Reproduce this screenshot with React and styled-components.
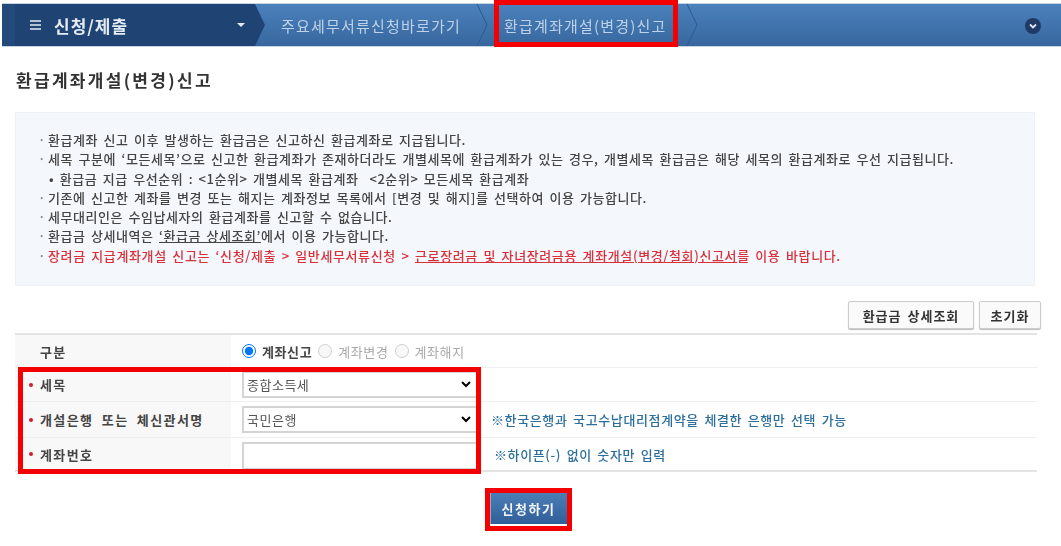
import React from "react";
import styled, { createGlobalStyle } from "styled-components";

const GlobalStyle = createGlobalStyle`
	html, body {
		margin: 0;
		padding: 0;
		background: #fff;
	}
	body {
		font-family: "Noto Sans CJK KR", "Noto Sans", sans-serif;
		color: #444;
	}
`;

const Page = styled.div`
	position: relative;
	width: 1061px;
	height: 546px;
	overflow: hidden;
	padding-top: 3px;
	box-sizing: border-box;
	filter: blur(0.5px);
`;

const Nav = styled.nav`
	display: flex;
	align-items: center;
	height: 44px;
	margin-left: 2px;
	border-top: 1px solid #c9d4e3;
	border-bottom: 1px solid #c9d4e3;
	box-sizing: border-box;
	background: linear-gradient(#4b81bc, #38679e);
`;

const MenuSegment = styled.div`
	display: flex;
	align-items: center;
	width: 263px;
	height: 100%;
	padding-left: 28px;
	box-sizing: border-box;
	background: #1f4473;
	clip-path: polygon(0 0, 253px 0, 263px 50%, 253px 100%, 0 100%);
	color: #e4ebf4;
	box-shadow: inset 13px 0 0 #234a7b;
`;

const MenuTitle = styled.span`
	margin-left: 13px;
	font-size: 17px;
	letter-spacing: 1px;
	font-weight: 700;
	flex: 1;
`;

const Caret = styled.span`
	width: 0;
	height: 0;
	margin-right: 20px;
	border-left: 4px solid transparent;
	border-right: 4px solid transparent;
	border-top: 4px solid #e4ebf4;
`;

const Crumb = styled.span`
	margin-left: ${(p) => p.$gap}px;
	font-size: 15px;
	letter-spacing: 1.2px;
	color: #bdd2e8;
	white-space: nowrap;
`;

const Chevron = styled.svg`
	flex: none;
	width: 12px;
	height: 42px;
	margin-left: ${(p) => p.$gap}px;
`;

const RoundButton = styled.span`
	display: flex;
	align-items: center;
	justify-content: center;
	width: 16px;
	height: 16px;
	margin-left: auto;
	margin-right: 20px;
	margin-top: 2px;
	border-radius: 50%;
	background: #1f3a66;
`;

const Content = styled.main`
	padding: 0 20px 0 15px;
`;

const Title = styled.h1`
	margin: 21px 0 20px 1px;
	font-size: 17px;
	line-height: 24px;
	font-weight: 700;
	color: #333;
	letter-spacing: 2.3px;
`;

const InfoBox = styled.ul`
	width: 1020px;
	height: 174px;
	margin: 0;
	padding: 17px 0 0 22px;
	box-sizing: border-box;
	list-style: none;
	background: #f4f7fc;
	border: 1px solid #eef1f6;
`;

const InfoLine = styled.li`
	display: flex;
	height: 19.3px;
	line-height: 19.3px;
	font-size: 13px;
	letter-spacing: ${(p) => (p.$red ? "0.62px" : "0.55px")};
	word-spacing: 2px;
	font-weight: 500;
	white-space: pre;
	color: ${(p) => (p.$red ? "#d9303a" : "#444")};
	padding-left: ${(p) => (p.$sub ? "11px" : "0")};

	&::before {
		content: "${(p) => (p.$sub ? "" : "·")}";
		width: ${(p) => (p.$sub ? "0" : "10px")};
		color: #888;
	}
`;

const InfoLink = styled.span`
	text-decoration: underline;
`;

const ButtonRow = styled.div`
	display: flex;
	justify-content: flex-end;
	gap: 5px;
	width: 1026px;
	margin-top: 15px;
	margin-bottom: 4px;
`;

const PlainButton = styled.button`
	width: ${(p) => p.$width}px;
	height: 28px;
	padding: 0;
	border: 1px solid #ccc;
	border-radius: 2px;
	background: #fafafa;
	box-shadow: 0 1px 1px #bbb;
	font-family: inherit;
	font-size: 13px;
	font-weight: 700;
	letter-spacing: 1px;
	word-spacing: 2px;
	color: #333;
`;

const FormTable = styled.div`
	width: 1022px;
	border-top: 2px solid #e4e4e4;
	border-bottom: 2px solid #e4e4e4;
`;

const Row = styled.div`
	display: grid;
	grid-template-columns: 216px 1fr;
	height: ${(p) => p.$height}px;
	& + & {
		border-top: 1px solid #eee;
	}
`;

const Label = styled.div`
	display: flex;
	align-items: center;
	padding-left: ${(p) => (p.$required ? "14px" : "25px")};
	background: #f8f8f8;
	font-size: 13px;
	font-weight: 700;
	letter-spacing: 1.4px;
	word-spacing: 4px;
	color: #444;
	gap: 7px;
`;

const RequiredMark = styled.span`
	width: 4px;
	height: 4px;
	border-radius: 50%;
	background: #d01c2c;
`;

const Field = styled.div`
	display: flex;
	align-items: center;
	padding-left: 11px;
`;

const RadioOption = styled.label`
	display: flex;
	align-items: center;
	gap: 6px;
	margin-right: 6px;
	font-size: 13px;
	letter-spacing: 0.6px;
	font-weight: ${(p) => (p.$active ? 700 : 400)};
	color: ${(p) => (p.$active ? "#444" : "#aaa")};
`;

const Radio = styled.input`
	width: 14px;
	height: 14px;
	margin: 0;
`;

const Select = styled.select`
	width: 236px;
	height: 27px;
	flex: none;
	appearance: none;
	border: 2px solid #d4d4d4;
	background: #fff url("data:image/svg+xml;utf8,<svg xmlns='http://www.w3.org/2000/svg' width='10' height='7' viewBox='0 0 10 7'><path d='M1 1l4 4 4-4' fill='none' stroke='black' stroke-width='2'/></svg>") no-repeat right 5px center;
	font-family: inherit;
	font-size: 13px;
	letter-spacing: 0.5px;
	color: #555;
	padding-left: 3px;
`;

const TextInput = styled.input`
	width: 236px;
	height: 28px;
	flex: none;
	margin-top: 4px;
	box-sizing: border-box;
	border: 2px solid #d4d4d4;
	background: #fff;
`;

const Hint = styled.span`
	margin-left: ${(p) => p.$gap}px;
	font-size: 13px;
	letter-spacing: 0.62px;
	word-spacing: 2px;
	font-weight: 500;
	color: #2c6f9c;
	white-space: nowrap;
`;

const SubmitRow = styled.div`
	display: flex;
	justify-content: center;
	width: 1026px;
	margin-top: 21px;
`;

const SubmitButton = styled.button`
	width: 77px;
	height: 31px;
	padding: 0;
	border: none;
	border-left: 1px solid #8fa9c8;
	background: linear-gradient(#4c7eb6, #2f5e98);
	font-family: inherit;
	font-size: 13px;
	letter-spacing: 1.6px;
	font-weight: 700;
	color: #f0f4fa;
`;

const RedFrame = styled.div`
	position: absolute;
	left: ${(p) => p.$x}px;
	top: ${(p) => p.$y}px;
	width: ${(p) => p.$w}px;
	height: ${(p) => p.$h}px;
	box-sizing: border-box;
	border: 5px solid #f50000;
`;

const App = () => {
  return (
    <Page>
      <GlobalStyle />
      <Nav>
        <MenuSegment>
          <svg width="11" height="10" viewBox="0 0 11 10">
            <path d="M0 1h11M0 5h11M0 9h11" stroke="#e4ebf4" strokeWidth="1.6" />
          </svg>
          <MenuTitle>신청/제출</MenuTitle>
          <Caret />
        </MenuSegment>
        <Crumb $gap={16}>주요세무서류신청바로가기</Crumb>
        <Chevron $gap={15} viewBox="0 0 12 42">
          <path d="M1 0l10 21L1 42" fill="none" stroke="#2d5a8f" />
        </Chevron>
        <Crumb $gap={16}>환급계좌개설(변경)신고</Crumb>
        <Chevron $gap={19} viewBox="0 0 12 42">
          <path d="M1 0l10 21L1 42" fill="none" stroke="#2d5a8f" />
        </Chevron>
        <RoundButton>
          <svg width="10" height="10" viewBox="0 0 10 10">
            <path d="M2 3.5l3 3 3-3" fill="none" stroke="#dfe6f0" strokeWidth="1.8" />
          </svg>
        </RoundButton>
      </Nav>
      <Content>
        <Title>환급계좌개설(변경)신고</Title>
        <InfoBox>
          <InfoLine>환급계좌 신고 이후 발생하는 환급금은 신고하신 환급계좌로 지급됩니다.</InfoLine>
          <InfoLine>세목 구분에 ‘모든세목’으로 신고한 환급계좌가 존재하더라도 개별세목에 환급계좌가 있는 경우, 개별세목 환급금은 해당 세목의 환급계좌로 우선 지급됩니다.</InfoLine>
          <InfoLine $sub>• 환급금 지급 우선순위 : &lt;1순위&gt; 개별세목 환급계좌  &lt;2순위&gt; 모든세목 환급계좌</InfoLine>
          <InfoLine>기존에 신고한 계좌를 변경 또는 해지는 계좌정보 목록에서 [변경 및 해지]를 선택하여 이용 가능합니다.</InfoLine>
          <InfoLine>세무대리인은 수임납세자의 환급계좌를 신고할 수 없습니다.</InfoLine>
          <InfoLine>환급금 상세내역은 <InfoLink>‘환급금 상세조회’</InfoLink>에서 이용 가능합니다.</InfoLine>
          <InfoLine $red>장려금 지급계좌개설 신고는 ‘신청/제출 &gt; 일반세무서류신청 &gt; <InfoLink>근로장려금 및 자녀장려금용 계좌개설(변경/철회)신고서</InfoLink>를 이용 바랍니다.</InfoLine>
        </InfoBox>
        <ButtonRow>
          <PlainButton $width={126}>환급금 상세조회</PlainButton>
          <PlainButton $width={62}>초기화</PlainButton>
        </ButtonRow>
        <FormTable>
          <Row $height={32}>
            <Label>구분</Label>
            <Field>
              <RadioOption $active>
                <Radio type="radio" name="kind" defaultChecked />
                계좌신고
              </RadioOption>
              <RadioOption>
                <Radio type="radio" name="kind" disabled />
                계좌변경
              </RadioOption>
              <RadioOption>
                <Radio type="radio" name="kind" disabled />
                계좌해지
              </RadioOption>
            </Field>
          </Row>
          <Row $height={33}>
            <Label $required>
              <RequiredMark />
              세목
            </Label>
            <Field>
              <Select defaultValue="종합소득세">
                <option>종합소득세</option>
              </Select>
            </Field>
          </Row>
          <Row $height={35}>
            <Label $required>
              <RequiredMark />
              개설은행 또는 체신관서명
            </Label>
            <Field>
              <Select defaultValue="국민은행">
                <option>국민은행</option>
              </Select>
              <Hint $gap={13}>※한국은행과 국고수납대리점계약을 체결한 은행만 선택 가능</Hint>
            </Field>
          </Row>
          <Row $height={32}>
            <Label $required>
              <RequiredMark />
              계좌번호
            </Label>
            <Field>
              <TextInput type="text" />
              <Hint $gap={16}>※하이픈(-) 없이 숫자만 입력</Hint>
            </Field>
          </Row>
        </FormTable>
        <SubmitRow>
          <SubmitButton>신청하기</SubmitButton>
        </SubmitRow>
      </Content>
      <RedFrame $x={494} $y={0} $w={184} $h={47} />
      <RedFrame $x={18} $y={367} $w={463} $h={107} />
      <RedFrame $x={485} $y={488} $w={87} $h={43} />
    </Page>
  );
};

export default App;
